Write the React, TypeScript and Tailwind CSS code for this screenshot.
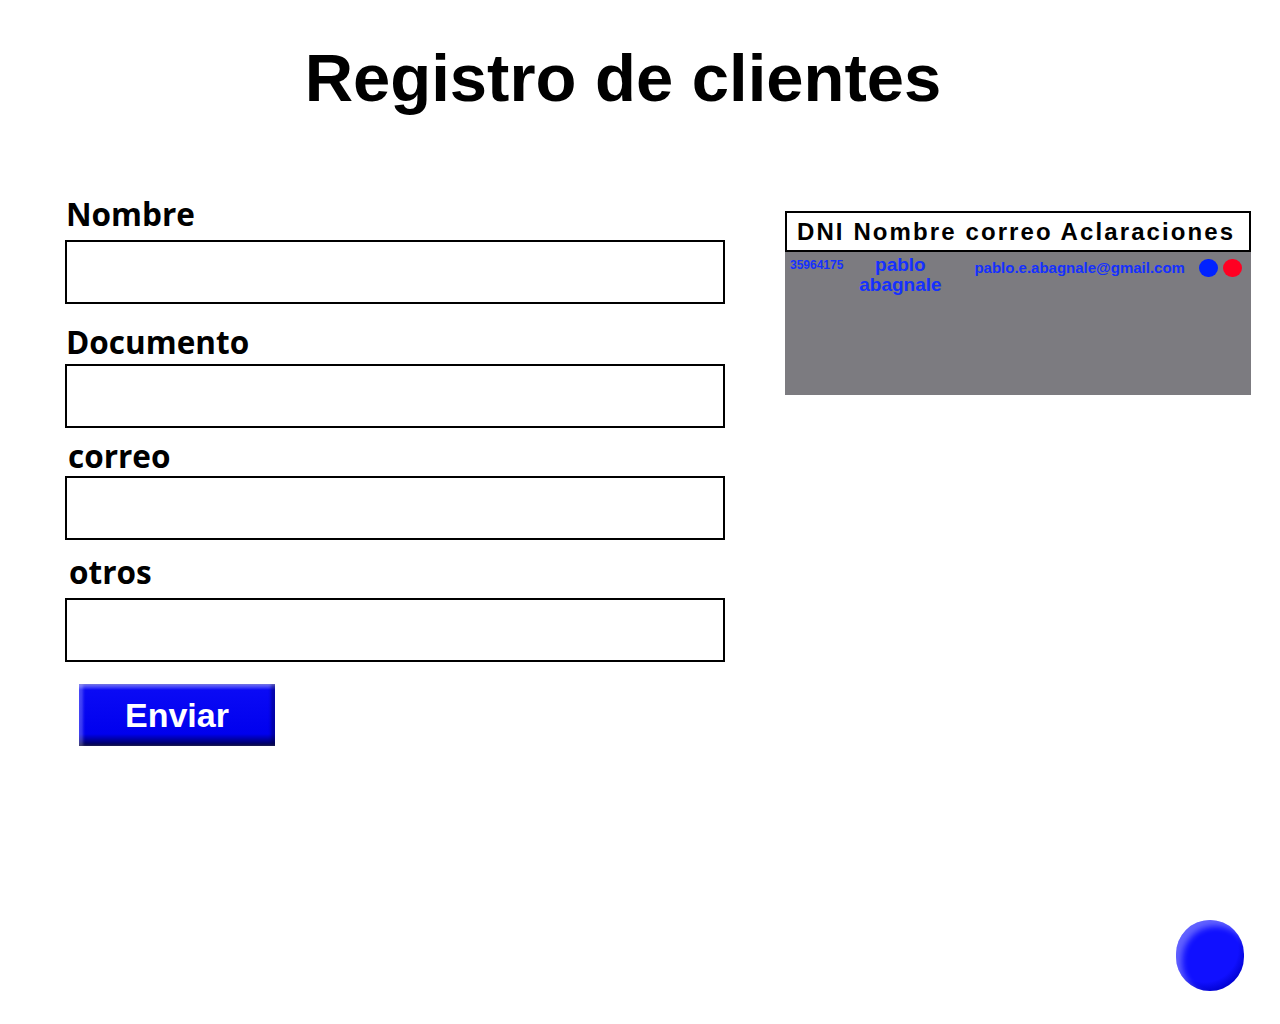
export default function App() {
  const fields = [
    { label: "Nombre", mt: "mt-[78px]", gap: "mb-[8px]", lx: "pl-[66px]" },
    { label: "Documento", mt: "mt-[20px]", gap: "mb-[4px]", lx: "pl-[66px]" },
    { label: "correo", mt: "mt-[10px]", gap: "mb-[2px]", lx: "pl-[68px]" },
    { label: "otros", mt: "mt-[14px]", gap: "mb-[8px]", lx: "pl-[69px]" },
  ];
  return (
    <div className="relative min-h-[1024px] w-[1280px] bg-white font-['Liberation_Sans',Arial,sans-serif] text-black">
      <h1 className="w-[1246px] pt-[38px] text-center text-[67px] font-bold leading-[80px]">Registro de clientes</h1>
      <div className="flex">
        <form className="w-[760px]" onSubmit={(e) => e.preventDefault()}>
          {fields.map((f) => (
            <div key={f.label} className={f.mt}>
              <label className={`block ${f.lx} ${f.gap} font-['Open_Sans',sans-serif] text-[31.5px] font-bold leading-[36px]`}>{f.label}</label>
              <input className="ml-[65px] block h-[64px] w-[660px] border-2 border-black bg-white" />
            </div>
          ))}
          <button className="ml-[79px] mt-[22px] h-[62px] w-[196px] bg-[linear-gradient(to_bottom,#7a7aff_0px,#0a0af5_6px,#0000ee_50px,#000080_58px,#000040_62px)] text-[34px] font-bold text-white shadow-[inset_4px_0_3px_rgba(255,255,255,0.25),inset_-4px_0_3px_rgba(0,0,60,0.4)]">
            Enviar
          </button>
        </form>
        <div className="ml-[25px] mt-[93px] w-[466px]">
          <div className="flex h-[41px] items-center border-2 border-black bg-white pl-[10px] text-[24px] font-bold tracking-[2.1px]">
            DNI Nombre correo Aclaraciones
          </div>
          <div className="h-[143px] bg-[#7c7b80]">
            <div className="flex items-start text-[#1530ff] font-bold">
              <span className="ml-[5px] mt-[6px] text-[12px] leading-[14px]">35964175</span>
              <span className="ml-[14px] mt-[3px] w-[86px] text-center text-[19px] leading-[20px]">pablo abagnale</span>
              <span className="ml-[31px] mt-[7px] text-[15px] leading-[18px]">pablo.e.abagnale@gmail.com</span>
              <span className="ml-[14px] mt-[7px] h-[18px] w-[19px] rounded-full bg-[#0022ff]" />
              <span className="ml-[5px] mt-[7px] h-[18px] w-[19px] rounded-full bg-[#ff0022]" />
            </div>
          </div>
        </div>
      </div>
      <button className="absolute left-[1176px] top-[920px] h-[71px] w-[68px] rounded-full bg-[radial-gradient(circle_at_42%_40%,#1010ff_58%,#0000cc_78%,#000040_100%)] shadow-[inset_6px_6px_6px_rgba(255,255,255,0.35)]" />
    </div>
  );
}
